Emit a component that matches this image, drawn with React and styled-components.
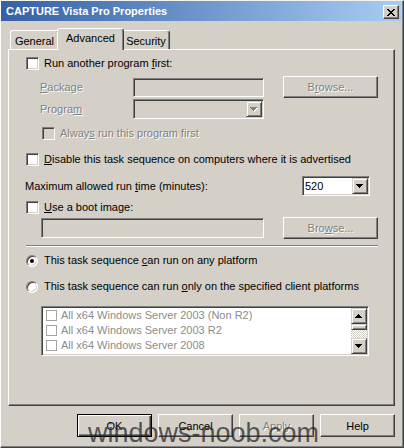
import React from 'react';
import styled, { createGlobalStyle, css } from 'styled-components';

const Global = createGlobalStyle`
  html, body { margin: 0; padding: 0; background: #d4d0c8; }
  body { font-family: "Liberation Sans", Arial, sans-serif; font-size: 11px; color: #000; }
  * { box-sizing: border-box; }
`;

const raised = css`
  border-top: 1px solid #fff;
  border-left: 1px solid #fff;
  border-right: 1px solid #404040;
  border-bottom: 1px solid #404040;
  box-shadow: inset -1px -1px 0 #808080;
`;

const sunken = css`
  border-top: 1px solid #808080;
  border-left: 1px solid #808080;
  border-right: 1px solid #fff;
  border-bottom: 1px solid #fff;
  box-shadow: inset 1px 1px 0 #404040, inset -1px -1px 0 #d4d0c8;
`;

const Window = styled.div`
  position: relative;
  width: 404px;
  height: 448px;
  display: flex;
  flex-direction: column;
  background: #d4d0c8;
  border-top: 1px solid #f4f3ee;
  border-left: 1px solid #fff;
  border-right: 1px solid #404040;
  border-bottom: 1px solid #404040;
  box-shadow: inset -1px -1px 0 #808080;
  padding: 0 2px 2px 0;
  overflow: hidden;
`;

const TitleBar = styled.div`
  flex: none;
  height: 20px;
  display: flex;
  align-items: center;
  justify-content: space-between;
  padding: 0 2px 0 5px;
  background: linear-gradient(to right, #3460a4, #a8ccf2);
  color: #fff;
  font-weight: bold;
  font-size: 11px;
`;

const CloseBtn = styled.span`
  width: 16px;
  height: 14px;
  margin-top: 2px;
  background: #d4d0c8;
  display: flex;
  align-items: center;
  justify-content: center;
  border-top: 1px solid #fff;
  border-left: 1px solid #fff;
  border-right: 1px solid #404040;
  border-bottom: 1px solid #404040;
  box-shadow: inset -1px -1px 0 #808080;
`;

const Body = styled.div`
  flex: 1;
  display: flex;
  flex-direction: column;
  padding: 7px 6px 0 7px;
`;

const TabStrip = styled.div`
  height: 21px;
  display: flex;
  align-items: flex-end;
  padding-left: 2px;
`;

const Tab = styled.div`
  position: relative;
  width: ${p => p.$w}px;
  height: ${p => (p.$active ? 22 : 19)}px;
  margin: ${p => (p.$active ? '0 -2px -1px' : '0')};
  z-index: ${p => (p.$active ? 2 : 1)};
  background: #d4d0c8;
  border-top: 1px solid #fff;
  border-left: 1px solid #fff;
  border-right: 1px solid #404040;
  box-shadow: inset -1px 0 0 #808080;
  border-radius: 3px 3px 0 0;
  display: flex;
  justify-content: center;
  align-items: flex-start;
  padding-top: ${p => (p.$active ? 3 : 4)}px;
  line-height: 13px;
`;

const Panel = styled.div`
  position: relative;
  z-index: 1;
  height: 357px;
  ${raised};
  padding: 7px 16px 0 17px;
  display: flex;
  flex-direction: column;
`;

const Row = styled.div`
  display: flex;
  align-items: center;
  justify-content: ${p => (p.$spread ? 'space-between' : 'flex-start')};
  gap: ${p => p.$gap ?? 5}px;
  margin-top: ${p => p.$mt || 0}px;
  margin-left: ${p => p.$ml || 0}px;
`;

const Label = styled.span`
  line-height: 13px;
  white-space: nowrap;
  color: ${p => (p.$disabled ? '#808080' : '#000')};
  text-shadow: ${p => (p.$disabled ? '1px 1px 0 #fff' : 'none')};
  margin-left: ${p => p.$ml || 0}px;
`;

const CheckBox = styled.span`
  flex: none;
  width: 13px;
  height: 13px;
  background: ${p => (p.$disabled ? '#d4d0c8' : '#fff')};
  ${sunken};
`;

const Radio = styled.span`
  flex: none;
  width: 12px;
  height: 12px;
  border-radius: 50%;
  background: #fff;
  border: 1px solid;
  border-color: #808080 #fff #fff #808080;
  box-shadow: inset 1px 1px 0 #404040, inset -1px -1px 0 #d4d0c8;
  display: flex;
  align-items: center;
  justify-content: center;
  &::after {
    content: '';
    display: ${p => (p.$checked ? 'block' : 'none')};
    width: 4px;
    height: 4px;
    border-radius: 50%;
    background: #000;
  }
`;

const FieldGrid = styled.div`
  display: grid;
  grid-template-columns: 93px 131px 114px;
  grid-template-rows: 22px 20px;
  row-gap: 1px;
  align-items: center;
  margin-top: 6px;
  margin-left: 14px;
  & > button { justify-self: end; }
`;

const TextBox = styled.div`
  flex: none;
  width: ${p => (p.$w ? `${p.$w}px` : 'auto')};
  height: ${p => p.$h}px;
  background: ${p => (p.$disabled ? '#d4d0c8' : '#fff')};
  ${sunken};
`;

const Combo = styled.div`
  flex: none;
  width: ${p => (p.$w ? `${p.$w}px` : 'auto')};
  height: 20px;
  padding: 1px;
  display: flex;
  align-items: stretch;
  background: ${p => (p.$disabled ? '#d4d0c8' : '#fff')};
  ${sunken};
  margin-right: ${p => p.$mr || 0}px;
`;

const ComboText = styled.span`
  flex: 1;
  display: flex;
  align-items: center;
  padding-left: 1px;
  line-height: 13px;
`;

const ArrowBtn = styled.span`
  flex: none;
  width: 16px;
  height: 16px;
  display: flex;
  align-items: center;
  justify-content: center;
  background: #d4d0c8;
  border-top: 1px solid #d4d0c8;
  border-left: 1px solid #d4d0c8;
  border-right: 1px solid #404040;
  border-bottom: 1px solid #404040;
  box-shadow: inset 1px 1px 0 #fff, inset -1px -1px 0 #808080;
`;

const Button = styled.button`
  flex: none;
  width: ${p => p.$w}px;
  height: ${p => p.$h}px;
  padding: 0;
  font: inherit;
  background: #d4d0c8;
  color: ${p => (p.disabled ? '#808080' : '#000')};
  text-shadow: ${p => (p.disabled ? '1px 1px 0 #fff' : 'none')};
  ${p =>
    p.$default
      ? css`
          border: 1px solid #000;
          box-shadow: inset 1px 1px 0 #fff, inset -1px -1px 0 #404040, inset -2px -2px 0 #808080;
        `
      : raised};
  cursor: default;
`;

const Separator = styled.div`
  height: 2px;
  margin-top: 6px;
  border-top: 1px solid #808080;
  border-bottom: 1px solid #fff;
`;

const ListBox = styled.div`
  width: 328px;
  height: 50px;
  margin-top: 13px;
  margin-left: 15px;
  padding: 1px;
  display: flex;
  background: #fff;
  ${sunken};
`;

const Items = styled.div`
  flex: 1;
  display: flex;
  flex-direction: column;
`;

const Item = styled.div`
  height: 15px;
  display: flex;
  align-items: center;
  gap: 4px;
  padding-left: 3px;
  color: #8c8c8c;
  white-space: nowrap;
  line-height: 13px;
`;

const ItemCheck = styled.span`
  flex: none;
  width: 11px;
  height: 11px;
  border: 1px solid #a4a4a4;
  background: #fff;
`;

const ScrollBar = styled.div`
  flex: none;
  width: 16px;
  display: flex;
  flex-direction: column;
`;

const Thumb = styled.div`
  flex: none;
  height: 6px;
  background: #d4d0c8;
  border-top: 1px solid #d4d0c8;
  border-left: 1px solid #d4d0c8;
  border-right: 1px solid #404040;
  border-bottom: 1px solid #404040;
  box-shadow: inset 1px 1px 0 #fff, inset -1px -1px 0 #808080;
`;

const Track = styled.div`
  flex: 1;
  background-image: repeating-conic-gradient(#d4d0c8 0 25%, #fff 0 50%);
  background-size: 2px 2px;
`;

const ButtonRow = styled.div`
  display: flex;
  justify-content: flex-end;
  gap: 6px;
  margin-top: 8px;
`;

const Watermark = styled.div`
  position: absolute;
  left: 87px;
  top: 419px;
  font-family: "Liberation Sans", Arial, sans-serif;
  font-size: 27px;
  line-height: 1;
  color: rgba(35, 35, 35, 0.72);
  white-space: nowrap;
  pointer-events: none;
  z-index: 5;
`;

function Arrow({ dir = 'down', disabled }) {
  const rows = [
    [0, 7],
    [1, 5],
    [2, 3],
    [3, 1],
  ];
  const ordered = dir === 'down' ? rows : [...rows].reverse();
  const draw = (fill, off) =>
    ordered.map(([x, w], i) => (
      <rect key={`${fill}${i}`} x={x + off} y={i + off} width={w} height={1} fill={fill} />
    ));
  return (
    <svg width="8" height="5" viewBox="0 0 8 5" shapeRendering="crispEdges">
      {disabled && draw('#fff', 1)}
      {draw(disabled ? '#808080' : '#000', 0)}
    </svg>
  );
}

function CloseGlyph() {
  const rows = ['XX....XX', '.XX..XX.', '..XXXX..', '...XX...', '..XXXX..', '.XX..XX.', 'XX....XX'];
  return (
    <svg width="8" height="7" viewBox="0 0 8 7" shapeRendering="crispEdges">
      {rows.flatMap((r, y) =>
        r.split('').map((c, x) => (c === 'X' ? <rect key={`${x}-${y}`} x={x} y={y} width="1" height="1" fill="#000" /> : null))
      )}
    </svg>
  );
}

const platforms = [
  'All x64 Windows Server 2003 (Non R2)',
  'All x64 Windows Server 2003 R2',
  'All x64 Windows Server 2008',
];

export default function App() {
  return (
    <>
      <Global />
      <Window>
        <TitleBar>
          <span>CAPTURE Vista Pro Properties</span>
          <CloseBtn>
            <CloseGlyph />
          </CloseBtn>
        </TitleBar>
        <Body>
          <TabStrip>
            <Tab $w={49}>General</Tab>
            <Tab $w={67} $active>Advanced</Tab>
            <Tab $w={48}>Security</Tab>
          </TabStrip>
          <Panel>
            <Row>
              <CheckBox />
              <Label>
                Run another program <u>f</u>irst:
              </Label>
            </Row>

            <FieldGrid>
              <Label $disabled>
                <u>P</u>ackage
              </Label>
              <TextBox $h={19} $disabled />
              <Button $w={95} $h={22} disabled>
                B<u>r</u>owse...
              </Button>
              <Label $disabled>
                Progra<u>m</u>
              </Label>
              <Combo $disabled>
                <ComboText />
                <ArrowBtn>
                  <Arrow disabled />
                </ArrowBtn>
              </Combo>
            </FieldGrid>

            <Row $mt={8} $ml={16}>
              <CheckBox $disabled />
              <Label $disabled>
                Alway<u>s</u> run this program first
              </Label>
            </Row>

            <Row $mt={13}>
              <CheckBox />
              <Label>
                <u>D</u>isable this task sequence on computers where it is advertised
              </Label>
            </Row>

            <Row $mt={10} $spread>
              <Label $ml={-1}>
                Maximum allowed run <u>t</u>ime (minutes):
              </Label>
              <Combo $w={68} $mr={8}>
                <ComboText>520</ComboText>
                <ArrowBtn>
                  <Arrow />
                </ArrowBtn>
              </Combo>
            </Row>

            <Row $mt={5}>
              <CheckBox />
              <Label>
                <u>U</u>se a boot image:
              </Label>
            </Row>

            <Row $mt={3} $ml={15} $gap={19}>
              <TextBox $w={223} $h={20} $disabled />
              <Button $w={95} $h={22} disabled>
                Bro<u>w</u>se...
              </Button>
            </Row>

            <Separator />

            <Row $mt={7} $gap={6}>
              <Radio $checked />
              <Label>
                This task sequence <u>c</u>an run on any platform
              </Label>
            </Row>

            <Row $mt={13} $gap={6}>
              <Radio />
              <Label>
                This task sequence can run <u>o</u>nly on the specified client platforms
              </Label>
            </Row>

            <ListBox>
              <Items>
                {platforms.map(p => (
                  <Item key={p}>
                    <ItemCheck />
                    <span>{p}</span>
                  </Item>
                ))}
              </Items>
              <ScrollBar>
                <ArrowBtn>
                  <Arrow dir="up" />
                </ArrowBtn>
                <Thumb />
                <Track />
                <ArrowBtn>
                  <Arrow />
                </ArrowBtn>
              </ScrollBar>
            </ListBox>
          </Panel>

          <ButtonRow>
            <Button $w={75} $h={23} $default>
              OK
            </Button>
            <Button $w={75} $h={23}>
              Cancel
            </Button>
            <Button $w={75} $h={23} disabled>
              Apply
            </Button>
            <Button $w={75} $h={23}>
              Help
            </Button>
          </ButtonRow>
        </Body>
        <Watermark>windows-noob.com</Watermark>
      </Window>
    </>
  );
}
